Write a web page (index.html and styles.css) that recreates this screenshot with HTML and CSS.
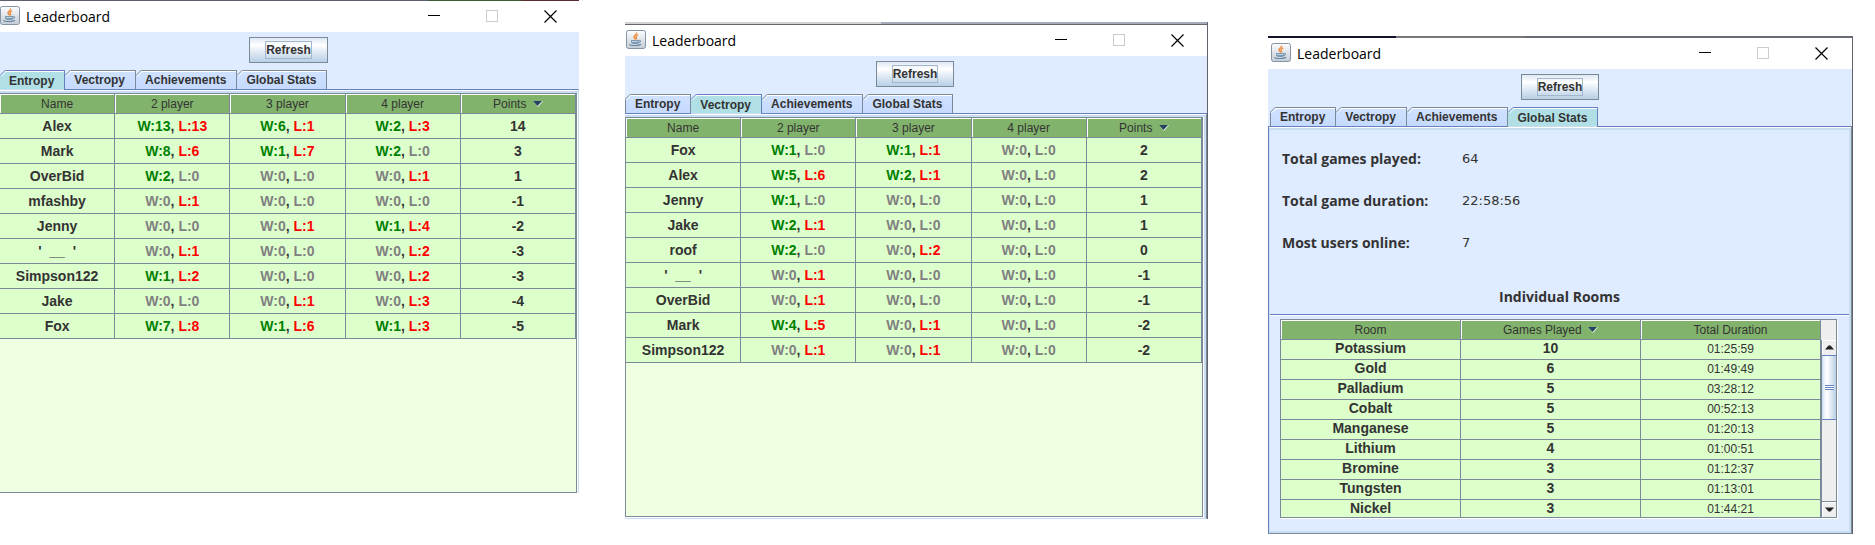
FILE: index.html
```html
<!DOCTYPE html>
<html lang="en">
<head>
<meta charset="utf-8">
<title>Leaderboard</title>
<link rel="stylesheet" href="styles.css">
</head>
<body>
<svg class="defs" aria-hidden="true">
  <defs>
    <linearGradient id="tile" x1="0" y1="0" x2="0" y2="1"><stop offset="0" stop-color="#fdfdfe"/><stop offset="1" stop-color="#c3ccd6"/></linearGradient>
  </defs>
  <symbol id="java" viewBox="0 0 20 19">
    <rect x="0.5" y="0.5" width="19" height="18" rx="2" fill="url(#tile)" stroke="#8494a5"/>
    <path d="M10.5 2.5c1 1.500-2.500 2.500-2.500 4.300 0 1.100 1.200 1.600 1.500 2.600M12.200 4.800c-1.500.6-2.300 1.300-2.200 2.200.1.900 1.100 1.200.3 2.500" fill="none" stroke="#f08a3c" stroke-width="1.400"/>
    <path d="M5 10h8.200v1.500c0 1.500-1 2.500-2.300 2.500H7.300C6 14 5 13 5 11.500z" fill="#7d9ab3"/>
    <path d="M13.200 10.300c1.800-.4 2.200 2-.6 2.400" fill="none" stroke="#6685a0"/>
    <path d="M3.500 14.200c1 1.700 9.500 1.700 11.500 0" fill="none" stroke="#6685a0" stroke-width="1.200"/>
    <path d="M6 11.500h6" stroke="#d5e0ea" stroke-width="0.800"/>
  </symbol>
  <symbol id="min" viewBox="0 0 13 13"><path d="M0 5.500h12" stroke="#000"/></symbol>
  <symbol id="max" viewBox="0 0 13 13"><rect x="0.500" y="0.500" width="11" height="11" fill="none" stroke="#ccc"/></symbol>
  <symbol id="close" viewBox="0 0 13 13"><path d="M.5.500l12 12M12.500.500l-12 12" stroke="#000" stroke-width="1.200"/></symbol>
  <symbol id="corner" viewBox="0 0 6 6"><path d="M0 0H6L0 6z" fill="#dfebfe"/><path d="M0 5.500L5.500 0" stroke="currentColor"/><path d="M1 6.500L6.500 1" stroke="#fff"/></symbol>
  <symbol id="sort" viewBox="0 0 10 6"><path d="M0 0h10L5 6z" fill="#e8f4e4"/><path d="M0 0h9L4.500 5z" fill="#24425f"/></symbol>
</svg>

<main class="desktop">
  <section class="window window-entropy">
    <div class="edge"></div>
    <header class="titlebar">
      <svg class="app-icon"><use href="#java"/></svg><h1 class="title">Leaderboard</h1>
      <button class="control" aria-label="Minimize"><svg><use href="#min"/></svg></button>
      <button class="control" aria-label="Maximize" disabled><svg><use href="#max"/></svg></button>
      <button class="control" aria-label="Close"><svg><use href="#close"/></svg></button>
    </header>
    <div class="toolbar"><button class="refresh"><span class="focus">Refresh</span></button></div>
    <div class="tabs" role="tablist">
      <button class="tab selected" role="tab" aria-selected="true"><svg class="corner"><use href="#corner"/></svg>Entropy</button>
      <button class="tab" role="tab"><svg class="corner"><use href="#corner"/></svg>Vectropy</button>
      <button class="tab" role="tab"><svg class="corner"><use href="#corner"/></svg>Achievements</button>
      <button class="tab" role="tab"><svg class="corner"><use href="#corner"/></svg>Global Stats</button>
    </div>
    <div class="panel" role="tabpanel">
      <div class="board">
        <table class="grid scores">
          <thead><tr><th>Name</th><th>2 player</th><th>3 player</th><th>4 player</th><th>Points <svg class="sort"><use href="#sort"/></svg></th></tr></thead>
          <tbody>
            <tr><td>Alex</td><td><b class="w">W:13</b>, <b class="l">L:13</b></td><td><b class="w">W:6</b>, <b class="l">L:1</b></td><td><b class="w">W:2</b>, <b class="l">L:3</b></td><td>14</td></tr>
            <tr><td>Mark</td><td><b class="w">W:8</b>, <b class="l">L:6</b></td><td><b class="w">W:1</b>, <b class="l">L:7</b></td><td><b class="w">W:2</b>, <b class="z">L:0</b></td><td>3</td></tr>
            <tr><td>OverBid</td><td><b class="w">W:2</b>, <b class="z">L:0</b></td><td><b class="z">W:0</b>, <b class="z">L:0</b></td><td><b class="z">W:0</b>, <b class="l">L:1</b></td><td>1</td></tr>
            <tr><td>mfashby</td><td><b class="z">W:0</b>, <b class="l">L:1</b></td><td><b class="z">W:0</b>, <b class="z">L:0</b></td><td><b class="z">W:0</b>, <b class="z">L:0</b></td><td>-1</td></tr>
            <tr><td>Jenny</td><td><b class="z">W:0</b>, <b class="z">L:0</b></td><td><b class="z">W:0</b>, <b class="l">L:1</b></td><td><b class="w">W:1</b>, <b class="l">L:4</b></td><td>-2</td></tr>
            <tr><td>'&nbsp; __ &nbsp;'</td><td><b class="z">W:0</b>, <b class="l">L:1</b></td><td><b class="z">W:0</b>, <b class="z">L:0</b></td><td><b class="z">W:0</b>, <b class="l">L:2</b></td><td>-3</td></tr>
            <tr><td>Simpson122</td><td><b class="w">W:1</b>, <b class="l">L:2</b></td><td><b class="z">W:0</b>, <b class="z">L:0</b></td><td><b class="z">W:0</b>, <b class="l">L:2</b></td><td>-3</td></tr>
            <tr><td>Jake</td><td><b class="z">W:0</b>, <b class="z">L:0</b></td><td><b class="z">W:0</b>, <b class="l">L:1</b></td><td><b class="z">W:0</b>, <b class="l">L:3</b></td><td>-4</td></tr>
            <tr><td>Fox</td><td><b class="w">W:7</b>, <b class="l">L:8</b></td><td><b class="w">W:1</b>, <b class="l">L:6</b></td><td><b class="w">W:1</b>, <b class="l">L:3</b></td><td>-5</td></tr>
          </tbody>
        </table>
      </div>
    </div>
  </section>

  <section class="window window-vectropy">
    <div class="edge"></div>
    <header class="titlebar">
      <svg class="app-icon"><use href="#java"/></svg><h1 class="title">Leaderboard</h1>
      <button class="control" aria-label="Minimize"><svg><use href="#min"/></svg></button>
      <button class="control" aria-label="Maximize" disabled><svg><use href="#max"/></svg></button>
      <button class="control" aria-label="Close"><svg><use href="#close"/></svg></button>
    </header>
    <div class="toolbar"><button class="refresh"><span class="focus">Refresh</span></button></div>
    <div class="tabs" role="tablist">
      <button class="tab" role="tab"><svg class="corner"><use href="#corner"/></svg>Entropy</button>
      <button class="tab selected" role="tab" aria-selected="true"><svg class="corner"><use href="#corner"/></svg>Vectropy</button>
      <button class="tab" role="tab"><svg class="corner"><use href="#corner"/></svg>Achievements</button>
      <button class="tab" role="tab"><svg class="corner"><use href="#corner"/></svg>Global Stats</button>
    </div>
    <div class="panel" role="tabpanel">
      <div class="board">
        <table class="grid scores">
          <thead><tr><th>Name</th><th>2 player</th><th>3 player</th><th>4 player</th><th>Points <svg class="sort"><use href="#sort"/></svg></th></tr></thead>
          <tbody>
            <tr><td>Fox</td><td><b class="w">W:1</b>, <b class="z">L:0</b></td><td><b class="w">W:1</b>, <b class="l">L:1</b></td><td><b class="z">W:0</b>, <b class="z">L:0</b></td><td>2</td></tr>
            <tr><td>Alex</td><td><b class="w">W:5</b>, <b class="l">L:6</b></td><td><b class="w">W:2</b>, <b class="l">L:1</b></td><td><b class="z">W:0</b>, <b class="z">L:0</b></td><td>2</td></tr>
            <tr><td>Jenny</td><td><b class="w">W:1</b>, <b class="z">L:0</b></td><td><b class="z">W:0</b>, <b class="z">L:0</b></td><td><b class="z">W:0</b>, <b class="z">L:0</b></td><td>1</td></tr>
            <tr><td>Jake</td><td><b class="w">W:2</b>, <b class="l">L:1</b></td><td><b class="z">W:0</b>, <b class="z">L:0</b></td><td><b class="z">W:0</b>, <b class="z">L:0</b></td><td>1</td></tr>
            <tr><td>roof</td><td><b class="w">W:2</b>, <b class="z">L:0</b></td><td><b class="z">W:0</b>, <b class="l">L:2</b></td><td><b class="z">W:0</b>, <b class="z">L:0</b></td><td>0</td></tr>
            <tr><td>'&nbsp; __ &nbsp;'</td><td><b class="z">W:0</b>, <b class="l">L:1</b></td><td><b class="z">W:0</b>, <b class="z">L:0</b></td><td><b class="z">W:0</b>, <b class="z">L:0</b></td><td>-1</td></tr>
            <tr><td>OverBid</td><td><b class="z">W:0</b>, <b class="l">L:1</b></td><td><b class="z">W:0</b>, <b class="z">L:0</b></td><td><b class="z">W:0</b>, <b class="z">L:0</b></td><td>-1</td></tr>
            <tr><td>Mark</td><td><b class="w">W:4</b>, <b class="l">L:5</b></td><td><b class="z">W:0</b>, <b class="l">L:1</b></td><td><b class="z">W:0</b>, <b class="z">L:0</b></td><td>-2</td></tr>
            <tr><td>Simpson122</td><td><b class="z">W:0</b>, <b class="l">L:1</b></td><td><b class="z">W:0</b>, <b class="l">L:1</b></td><td><b class="z">W:0</b>, <b class="z">L:0</b></td><td>-2</td></tr>
          </tbody>
        </table>
      </div>
    </div>
  </section>

  <section class="window window-stats">
    <div class="edge"></div>
    <header class="titlebar">
      <svg class="app-icon"><use href="#java"/></svg><h1 class="title">Leaderboard</h1>
      <button class="control" aria-label="Minimize"><svg><use href="#min"/></svg></button>
      <button class="control" aria-label="Maximize" disabled><svg><use href="#max"/></svg></button>
      <button class="control" aria-label="Close"><svg><use href="#close"/></svg></button>
    </header>
    <div class="toolbar"><button class="refresh"><span class="focus">Refresh</span></button></div>
    <div class="tabs" role="tablist">
      <button class="tab" role="tab"><svg class="corner"><use href="#corner"/></svg>Entropy</button>
      <button class="tab" role="tab"><svg class="corner"><use href="#corner"/></svg>Vectropy</button>
      <button class="tab" role="tab"><svg class="corner"><use href="#corner"/></svg>Achievements</button>
      <button class="tab selected" role="tab" aria-selected="true"><svg class="corner"><use href="#corner"/></svg>Global Stats</button>
    </div>
    <div class="panel" role="tabpanel">
      <dl class="totals">
        <dt>Total games played:</dt><dd>64</dd>
        <dt>Total game duration:</dt><dd>22:58:56</dd>
        <dt>Most users online:</dt><dd>7</dd>
      </dl>
      <h2 class="rooms-title">Individual Rooms</h2>
      <div class="rooms">
        <div class="rooms-view">
          <table class="grid">
            <thead><tr><th>Room</th><th>Games Played <svg class="sort"><use href="#sort"/></svg></th><th>Total Duration</th></tr></thead>
            <tbody>
              <tr><td>Potassium</td><td>10</td><td class="time">01:25:59</td></tr>
              <tr><td>Gold</td><td>6</td><td class="time">01:49:49</td></tr>
              <tr><td>Palladium</td><td>5</td><td class="time">03:28:12</td></tr>
              <tr><td>Cobalt</td><td>5</td><td class="time">00:52:13</td></tr>
              <tr><td>Manganese</td><td>5</td><td class="time">01:20:13</td></tr>
              <tr><td>Lithium</td><td>4</td><td class="time">01:00:51</td></tr>
              <tr><td>Bromine</td><td>3</td><td class="time">01:12:37</td></tr>
              <tr><td>Tungsten</td><td>3</td><td class="time">01:13:01</td></tr>
              <tr><td>Nickel</td><td>3</td><td class="time">01:44:21</td></tr>
            </tbody>
          </table>
        </div>
        <div class="scrollbar">
          <button class="step step-up" aria-label="Scroll up"><svg viewBox="0 0 9 5"><path d="M0 4.500L3.500.500h2L9 4.500z"/></svg></button>
          <div class="track"><div class="thumb"><span class="grip"></span></div></div>
          <button class="step step-down" aria-label="Scroll down"><svg viewBox="0 0 9 5"><path d="M0 .500h9L5.500 4.500h-2z"/></svg></button>
        </div>
      </div>
    </div>
  </section>
</main>
</body>
</html>
```

FILE: styles.css
```css
* { box-sizing: border-box; }

body {
  margin: 0;
  background: #fff;
  color: #333;
  font: 12px "Liberation Sans", Arial, sans-serif;
}

button {
  margin: 0;
  padding: 0;
  border: 0;
  background: none;
  color: inherit;
  font: inherit;
}

.defs { position: absolute; width: 0; height: 0; }

.desktop {
  display: grid;
  grid-template-columns: 579fr 629fr 645fr;
  align-items: start;
  padding-right: 22px;
}

/* Windows */
.window { min-width: 0; background: #dfebfe; }
.window-vectropy { margin: 22px 0 0 46px; }
.window-stats { margin: 36px 0 0 60px; }
.window-vectropy, .window-stats { border-right: 1px solid #5f636b; }

.edge { height: 1px; background: linear-gradient(90deg, #5d5e6d 74%, #3c5a35 74% 90%, #5c2c33 90%); }
.window-vectropy .edge {
  height: 3px;
  border-bottom: 1px solid #66666b;
  background: linear-gradient(90deg, #d2d2d4 44%, #a5abbb 44%);
}
.window-stats .edge {
  height: 2px;
  background: linear-gradient(90deg, #10152b 22%, #77777c 22% 44%, #676b76 44%);
}

.titlebar {
  display: flex;
  align-items: center;
  height: 31px;
  background: #fff;
}
.window-vectropy .titlebar { padding: 0 1px; }
.window-stats .titlebar { padding: 0 2px 0 3px; }
.app-icon { width: 20px; height: 19px; margin-bottom: 2px; }
.title {
  flex: 1;
  margin: 0 0 0 6px;
  color: #000;
  font: 14px/20px "Open Sans", "Noto Sans", sans-serif;
}
.control {
  display: grid;
  place-items: center;
  width: 58px;
  height: 31px;
}
.control svg { width: 13px; height: 13px; }

.toolbar { display: flex; justify-content: center; padding: 5px 2px 7px 0; }
.window-stats .toolbar { padding-right: 0; }
.refresh {
  height: 26px;
  padding: 0 15px;
  border: 1px solid #7a8a99;
  background: linear-gradient(#dde8f3, #fff 30%, #dfe9f3 60%, #b8cfe5);
  font-weight: bold;
}
.focus {
  display: block;
  height: 18px;
  border: 1px solid #a3b8cc;
  line-height: 17px;
}

/* Tabs */
.tabs { display: flex; height: 19px; }
.window-stats .tabs { padding-left: 2px; }
.tab {
  position: relative;
  height: 19px;
  padding: 0 10px 0 9px;
  border: solid #7a8a99;
  border-width: 1px 1px 0 0;
  background: linear-gradient(#fff 1px, #cfe1ff 1px, #c5daff);
  font-weight: bold;
  line-height: 18px;
}
.window-vectropy .tab:first-child, .window-stats .tab:first-child { border-left-width: 1px; }
.tab.selected {
  z-index: 1;
  height: 20px;
  border-color: #6382bf;
  background: linear-gradient(#fff 1px, #b0e0e6 1px 18px, #c8ddf2 18px);
}
.corner {
  position: absolute;
  top: -1px;
  left: 0;
  width: 6px;
  height: 6px;
  color: #7a8a99;
}
.window-vectropy .tab:first-child .corner, .window-stats .tab:first-child .corner { left: -1px; }
.selected .corner { color: #6382bf; }

.panel {
  border-top: 1px solid #6382bf;
  box-shadow: inset 0 1px #fff, inset 0 3px #c8ddf2;
  padding-top: 3px;
}
.window-entropy .panel { padding-right: 1px; border-right: 1px solid #c8ddf2; background: #fff; }
.window-vectropy .panel {
  padding: 3px 3px 1px 0;
  border-right: 1px solid #7a8a99;
  border-bottom: 1px solid #c8ddf2;
  background: linear-gradient(90deg, #fff calc(100% - 2px), #c8ddf2 calc(100% - 2px));
}

.board {
  min-height: 400px;
  border: 1px solid #7a8a99;
  background: #eeffe2;
}
.window-entropy .board { border-left: 0; }

/* Tables */
.grid {
  width: 100%;
  border-collapse: separate;
  border-spacing: 0;
  table-layout: fixed;
  text-align: center;
}
.grid th, .grid td {
  padding: 0;
  border: solid #7a8a99;
  border-width: 0 1px 1px 0;
}
.grid th {
  height: 20px;
  padding-top: 2px;
  background: #82b36c;
  box-shadow: inset 1px 1px #fff;
  font-weight: normal;
  line-height: 17px;
}
.grid td {
  height: 20px;
  background: #ddffcc;
  font-size: 14px;
  font-weight: bold;
  line-height: 16px;
  vertical-align: top;
}
.grid .time { font-size: 12px; font-weight: normal; line-height: 19px; }
.grid.scores td { height: 25px; line-height: 18px; vertical-align: middle; }
.sort { width: 10px; height: 6px; margin-left: 3px; vertical-align: 1px; }
.w { color: #008000; }
.l { color: #f00; }
.z { color: #808080; }

/* Global stats */
.window-stats .panel {
  padding: 11px 2px 15px 1px;
  border: 1px solid #6382bf;
  border-right-color: #7a8a99;
  border-bottom-color: #7a8a99;
  box-shadow: inset 0 1px #fff, inset 0 3px #c8ddf2, inset -2px -2px #c8ddf2, inset 1px 0 #c8ddf2;
}
.totals {
  display: grid;
  grid-template-columns: 180px 1fr;
  margin: 0;
  padding-left: 12px;
  font: 14px/42px "Open Sans", "Noto Sans", sans-serif;
}
.totals dt { font-weight: bold; }
.totals dd { margin: 0; font-family: "DejaVu Sans", sans-serif; font-size: 13px; }
.rooms-title {
  margin: 0;
  padding-top: 16px;
  border-bottom: 1px solid #6382bf;
  box-shadow: 0 1px #fff;
  font: bold 14px/34px "Open Sans", "Noto Sans", sans-serif;
  text-align: center;
}
.rooms {
  display: flex;
  height: 199px;
  margin: 4px 12px 0 10px;
  border: 1px solid #7a8a99;
  box-shadow: 1px 1px #fff;
}
.rooms-view { flex: 1; overflow: hidden; }

.scrollbar {
  display: flex;
  flex-direction: column;
  width: 15px;
  padding-top: 20px;
  background: #eee;
}
.step {
  display: grid;
  place-items: center;
  height: 15px;
  border-left: 1px solid #7a8a99;
  box-shadow: inset 1px 1px #fff;
}
.step-down { height: 16px; border-top: 1px solid #7a8a99; }
.step svg { width: 9px; height: 5px; fill: #222; }
.track { flex: 1; border-left: 1px solid #7a8a99; }
.thumb {
  display: grid;
  place-items: center;
  height: 65px;
  border: solid #6382bf;
  border-width: 1px 0;
  background: linear-gradient(90deg, #c8ddf2 1px, #dfeaf5 1px, #fff 35%, #b8cfe5);
}
.grip {
  width: 9px;
  height: 5px;
  background: repeating-linear-gradient(#6382bf 0 1px, #fff 1px 2px);
}
```
